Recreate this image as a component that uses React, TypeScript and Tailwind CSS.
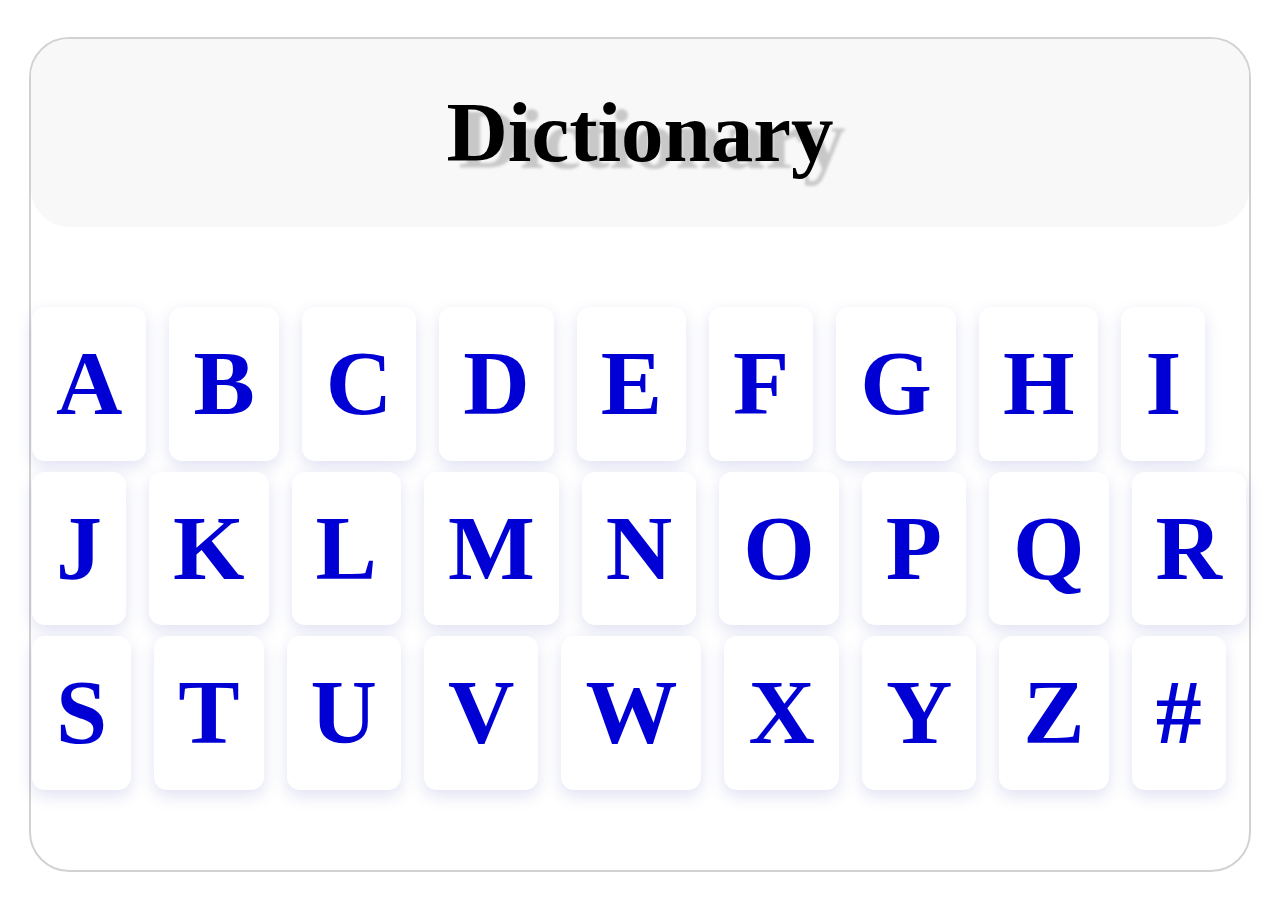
import React from 'react';

const letters = [
  'A', 'B', 'C', 'D', 'E', 'F', 'G', 'H', 'I',
  'J', 'K', 'L', 'M', 'N', 'O', 'P', 'Q', 'R',
  'S', 'T', 'U', 'V', 'W', 'X', 'Y', 'Z', '#',
];

export default function App() {
  return (
    <div className="min-h-[900px] bg-white pt-[37px] font-['Liberation_Serif','Times_New_Roman',serif]">
      <div className="mx-auto w-[1222px] rounded-[40px] border-2 border-[#d2d2d2] bg-white pb-[80px]">
        {/* Header */}
        <div className="flex h-[188px] items-center justify-center rounded-[38px] bg-[#f8f8f9]">
          <h1 className="m-0 text-[85px] font-bold text-black [text-shadow:12px_7px_3px_#c8c8c8]">
            Dictionary
          </h1>
        </div>

        {/* Letter tiles */}
        <div className="mt-[80px] flex flex-wrap gap-x-[23px] gap-y-[11px] pl-px">
          {letters.map((letter) => (
            <a
              key={letter}
              href="#"
              className="block rounded-[13px] bg-white p-[24px] text-[92px] leading-[1.149] font-bold text-[#0000d4] no-underline shadow-[0_6px_16px_rgba(100,110,190,0.2)]"
            >
              {letter}
            </a>
          ))}
        </div>
      </div>
    </div>
  );
}
